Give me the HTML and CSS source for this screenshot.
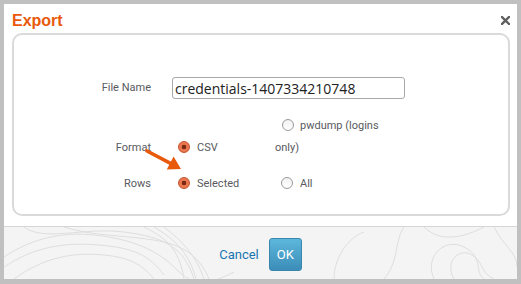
FILE: index.html
```html
<!DOCTYPE html>
<html>
<head>
<meta charset="utf-8">
<link rel="stylesheet" href="styles.css">
</head>
<body>
<div class="dialog">
  <div class="header">
    <h1 class="title">Export</h1>
    <button class="close" aria-label="Close">
      <svg width="9" height="9" viewBox="0 0 9 9"><path d="M1 1 L8 8 M8 1 L1 8" stroke="#5f5f5f" stroke-width="2.4" stroke-linecap="square"/></svg>
    </button>
  </div>
  <div class="panel">
    <div class="row row-name">
      <label class="lbl">File Name</label>
      <input class="fname" type="text" value="credentials-1407334210748">
    </div>
    <div class="row row-format">
      <div class="lbl">Format</div>
      <div class="opt"><span class="radio on"></span>CSV</div>
      <div class="opt opt-wide"><span class="radio"></span>pwdump (logins only)</div>
    </div>
    <div class="row row-rows">
      <div class="lbl">Rows</div>
      <div class="opt"><span class="radio on"></span>Selected</div>
      <div class="opt"><span class="radio"></span>All</div>
    </div>
  </div>
  <div class="footer">
    <a class="cancel" href="#">Cancel</a>
    <button class="ok">OK</button>
  </div>
</div>
<svg class="arrow" width="521" height="284" viewBox="0 0 521 284">
  <line x1="147" y1="151" x2="171" y2="163.6" stroke="#e8590c" stroke-width="3.6" stroke-linecap="round"/>
  <polygon points="181,169 166.8,169.5 173.6,156.6" fill="#e8590c"/>
</svg>
</body>
</html>
```
FILE: styles.css
```css
html, body {
  margin: 0;
  padding: 0;
}
body {
  background: #c0c0c0;
  width: 521px;
  height: 284px;
  overflow: hidden;
  position: relative;
  font-family: Roboto, "Liberation Sans", sans-serif;
}
.dialog {
  margin: 4px 0 0 4px;
  width: 513px;
  height: 275px;
  background: #fff;
  display: flex;
  flex-direction: column;
}
.header {
  height: 29px;
  display: flex;
  justify-content: space-between;
  align-items: flex-start;
  padding: 0 8px 0 8px;
  box-sizing: border-box;
}
.title {
  margin: 0;
  padding-top: 4px;
  line-height: 25px;
  font-family: "Liberation Sans", Arial, sans-serif;
  font-weight: bold;
  font-size: 16px;
  color: #e8590c;
}
.close {
  border: 0;
  background: none;
  padding: 0;
  margin-top: 12px;
  margin-right: -1px;
  width: 9px;
  height: 9px;
  display: block;
}
.close svg { display: block; }
.panel {
  margin-left: 8px;
  width: 498px;
  height: 183px;
  box-sizing: border-box;
  border: 2px solid #dadada;
  border-radius: 10px;
  font-size: 11px;
  color: #585a5e;
}
.row {
  display: grid;
  grid-template-columns: 158px 103px 112px;
  align-items: end;
}
.lbl {
  text-align: right;
  padding-right: 21px;
  line-height: 22px;
}
.row-name {
  margin-top: 42px;
  align-items: center;
}
.fname {
  grid-column: 2 / span 2;
  width: 233px;
  height: 22px;
  box-sizing: border-box;
  border: 1px solid #a9a9a9;
  border-radius: 3px;
  padding: 0 0 0 2px;
  margin: 0;
  font-family: "Open Sans", sans-serif;
  font-size: 14px;
  color: #222;
  outline: none;
}
.row-format {
  margin-top: 16px;
}
.row-rows {
  margin-top: 14px;
}
.opt {
  line-height: 22px;
}
.radio {
  display: inline-block;
  box-sizing: border-box;
  width: 12px;
  height: 12px;
  border-radius: 50%;
  border: 1px solid #9a9a9a;
  background: linear-gradient(#f2f2f2, #fff);
  vertical-align: -2px;
  margin: 0 7px 0 6px;
  position: relative;
}
.opt-wide .radio {
  margin-left: 7px;
  margin-right: 6px;
}
.radio.on {
  border-color: #c4522b;
  background: radial-gradient(circle, #7a2a12 0 2px, #e9774f 2.6px);
}
.footer {
  margin-top: 10px;
  flex: 1;
  border-top: 1px solid #d6d6d6;
  background-color: #f4f4f4;
  background-image: url("data:image/svg+xml;utf8,<svg xmlns='http://www.w3.org/2000/svg' width='513' height='52' viewBox='0 0 513 52'><g fill='none' stroke='%23dedede' stroke-width='1'><path d='M0 30 C30 10 60 5 90 8 S150 20 170 40 S200 60 230 45'/><path d='M0 40 C30 20 60 15 95 18 S145 28 160 48'/><path d='M10 52 C40 30 70 25 100 28 S140 40 150 52'/><path d='M20 0 C40 15 80 0 120 5 S180 20 190 52'/><path d='M60 0 C90 10 130 8 160 15 S200 40 205 52'/><path d='M140 0 C160 10 175 20 180 52'/><path d='M150 0 C170 12 185 25 192 52'/><path d='M160 0 C178 14 192 28 200 52'/><path d='M330 52 C330 30 345 10 360 5'/><path d='M400 0 C390 15 395 35 380 52'/><path d='M430 52 C420 30 440 10 460 20 S470 45 480 52'/><path d='M450 52 C440 35 455 20 468 28 S475 45 490 52'/><path d='M490 0 C500 20 513 25 513 40'/><path d='M420 0 C440 20 470 5 480 0'/></g></svg>");
  display: flex;
  justify-content: center;
  align-items: flex-start;
  gap: 10px;
  padding-top: 11px;
  box-sizing: border-box;
}
.cancel {
  font-family: Roboto, sans-serif;
  font-size: 13px;
  color: #1b74b2;
  text-decoration: none;
  line-height: 33px;
}
.ok {
  width: 33px;
  height: 33px;
  border: 1px solid #3a86ad;
  border-radius: 3px;
  background: linear-gradient(#5db7dc, #3b8db8);
  color: #fff;
  font-family: Roboto, sans-serif;
  font-size: 13px;
  padding: 0;
}
.arrow {
  position: absolute;
  left: 0;
  top: 0;
  pointer-events: none;
}
```
